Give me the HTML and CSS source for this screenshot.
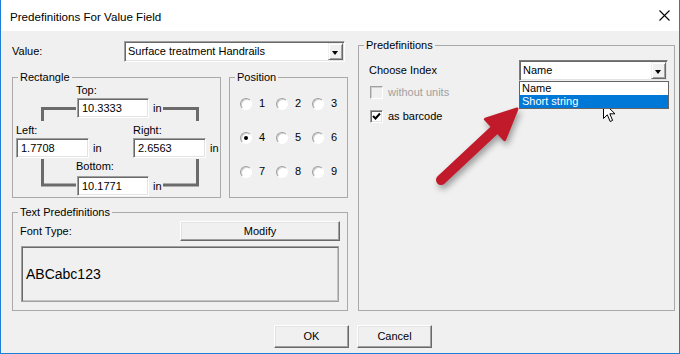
FILE: index.html
```html
<!doctype html>
<html lang="en">
    <head>
        <meta charset="UTF-8" />
        <title>Predefinitions For Value Field</title>
        <link rel="stylesheet" href="styles.css">
    </head>
    <body>
        <div class="window">
            <div class="titlebar">
                <span class="title">Predefinitions For Value Field</span>
                <svg class="close" width="11" height="11" viewBox="0 0 11 11">
                    <path d="M0.5 0.5 L10.5 10.5 M10.5 0.5 L0.5 10.5" stroke="#000" stroke-width="1.1" />
                </svg>
            </div>
            <div class="client">
                <div class="main">
                    <div class="col-left">
                        <div class="value-row">
                            <span class="value-label">Value:</span>
                            <div class="combo value-combo">
                                <span class="combo-text">Surface treatment Handrails</span>
                                <span class="drop"></span>
                            </div>
                        </div>
                        <div class="group-row">
                            <fieldset class="group rect-group">
                                <legend>Rectangle</legend>
                                <div class="rect-body">
                                    <svg class="brackets" width="207" height="112" viewBox="0 0 207 112">
                                        <path d="M63 24.5 H29.5 V37 M150 24.5 H184.5 V37 M29.5 75 V101 H63 M184.5 75 V101 H150" />
                                    </svg>
                                    <div class="mid-label">Top:</div>
                                    <div class="unit-row mid-row">
                                        <div class="field">10.3333</div>
                                        <span class="unit">in</span>
                                    </div>
                                    <div class="side-labels">
                                        <span>Left:</span>
                                        <span>Right:</span>
                                    </div>
                                    <div class="side-fields">
                                        <div class="unit-row">
                                            <div class="field side">1.7708</div>
                                            <span class="unit">in</span>
                                        </div>
                                        <div class="unit-row">
                                            <div class="field side">2.6563</div>
                                            <span class="unit">in</span>
                                        </div>
                                    </div>
                                    <div class="mid-label bottom-label">Bottom:</div>
                                    <div class="unit-row mid-row bottom-row">
                                        <div class="field">10.1771</div>
                                        <span class="unit">in</span>
                                    </div>
                                </div>
                            </fieldset>
                            <fieldset class="group pos-group">
                                <legend>Position</legend>
                                <div class="radios">
                                    <div class="radio-item"><span class="radio"></span>1</div>
                                    <div class="radio-item"><span class="radio"></span>2</div>
                                    <div class="radio-item"><span class="radio"></span>3</div>
                                    <div class="radio-item"><span class="radio checked"></span>4</div>
                                    <div class="radio-item"><span class="radio"></span>5</div>
                                    <div class="radio-item"><span class="radio"></span>6</div>
                                    <div class="radio-item"><span class="radio"></span>7</div>
                                    <div class="radio-item"><span class="radio"></span>8</div>
                                    <div class="radio-item"><span class="radio"></span>9</div>
                                </div>
                            </fieldset>
                        </div>
                        <fieldset class="group text-group">
                            <legend>Text Predefinitions</legend>
                            <div class="font-row">
                                <span>Font Type:</span>
                                <div class="button modify">Modify</div>
                            </div>
                            <div class="preview">ABCabc123</div>
                        </fieldset>
                    </div>
                    <fieldset class="group predef-group">
                        <legend>Predefinitions</legend>
                        <div class="index-row">
                            <span>Choose Index</span>
                            <div class="combo-wrap">
                                <div class="combo index-combo">
                                    <span class="combo-text">Name</span>
                                    <span class="drop"></span>
                                </div>
                                <div class="droplist">
                                    <div class="option">Name</div>
                                    <div class="option selected">Short string</div>
                                </div>
                            </div>
                        </div>
                        <div class="check-row disabled">
                            <span class="checkbox"></span>
                            <span>without units</span>
                        </div>
                        <div class="check-row">
                            <span class="checkbox">
                                <svg width="9" height="9" viewBox="0 0 9 9">
                                    <path d="M1 4 L3.5 6.5 L8 1.5" fill="none" stroke="#000" stroke-width="2" />
                                </svg>
                            </span>
                            <span>as barcode</span>
                        </div>
                    </fieldset>
                </div>
                <div class="buttons">
                    <div class="button dlg">OK</div>
                    <div class="button dlg">Cancel</div>
                </div>
            </div>

            <!-- annotation overlays -->
            <svg class="arrow" width="110" height="100" viewBox="0 0 110 100">
                <path d="M20 85 L74 34.5" stroke="#c11a2b" stroke-width="10" stroke-linecap="round" />
                <path d="M96 14 L83.6 44.7 L64.4 24.3 Z" fill="#c11a2b" stroke="#c11a2b" stroke-width="3" stroke-linejoin="round" />
            </svg>
            <svg class="cursor" width="14" height="22" viewBox="0 0 14 22">
                <path d="M0.5 0.5 L0.5 16.5 L4.3 12.8 L7.2 19.5 L9.6 18.4 L6.8 11.8 L12 11.8 Z" fill="#fff" stroke="#000" stroke-width="1" />
            </svg>
        </div>
    </body>
</html>
```

FILE: styles.css
```css
body {
    margin: 0;
    padding: 0;
    background: #f0f0f0;
    font-family: "Liberation Sans", Arial, sans-serif;
    font-size: 11px;
    line-height: 13px;
    color: #000;
}

.window {
    position: relative;
    width: 680px;
    height: 354px;
    box-sizing: border-box;
    border: 1px solid #1a7fd5;
    border-top: none;
    display: flex;
    flex-direction: column;
    overflow: hidden;
}

.titlebar {
    height: 31px;
    flex: none;
    background: #fff;
    display: flex;
    align-items: center;
    padding: 0 9px 0 9px;
}

.title {
    font-size: 11.6px;
    padding-top: 1px;
}

.close {
    margin-left: auto;
    margin-top: 0;
}

.client {
    flex: 1;
    background: #f0f0f0;
    padding: 8px 4px 0 11px;
    display: flex;
    flex-direction: column;
}

.main {
    display: grid;
    grid-template-columns: 336px 317px;
    column-gap: 10px;
    height: 272px;
}

.col-left {
    display: flex;
    flex-direction: column;
}

/* group boxes */
.group {
    margin: 0;
    padding: 0;
    min-width: 0;
    border: 1px solid #a9a9a9;
}

.group legend {
    padding: 0 2px;
    margin-left: 5px;
    line-height: 13px;
}

/* value row */
.value-row {
    display: flex;
    align-items: center;
    margin-top: 2px;
    height: 21px;
}

.value-label {
    width: 112px;
}

.combo {
    display: flex;
    box-sizing: border-box;
    height: 21px;
    background: #fff;
    border: 1px solid;
    border-color: #a0a0a0 #fff #fff #a0a0a0;
    box-shadow: inset 1px 1px 0 #696969, inset -1px -1px 0 #e3e3e3;
}

.value-combo {
    width: 221px;
}

.combo-text {
    flex: 1;
    padding-left: 3px;
    align-self: center;
}

.drop {
    position: relative;
    width: 15px;
    margin: 1px 1px 1px 0;
    box-sizing: border-box;
    background: #f0f0f0;
    border: 1px solid;
    border-color: #f0f0f0 #696969 #696969 #f0f0f0;
    box-shadow: inset 1px 1px 0 #fff, inset -1px -1px 0 #a0a0a0;
}

.drop::after {
    content: "";
    position: absolute;
    left: 3px;
    top: 7px;
    border-left: 3.5px solid transparent;
    border-right: 3.5px solid transparent;
    border-top: 4px solid #000;
}

/* rectangle + position */
.group-row {
    display: flex;
    gap: 8px;
    margin-top: 9px;
}

.rect-group {
    width: 209px;
    box-sizing: border-box;
    padding-bottom: 1px;
}

.rect-body {
    position: relative;
}

.brackets {
    position: absolute;
    left: 0;
    top: 0;
}

.brackets path {
    fill: none;
    stroke: #6b6b6b;
    stroke-width: 3;
}

.mid-label {
    margin-left: 63px;
}

.bottom-label {
    margin-top: 2px;
}

.unit-row {
    position: relative;
    display: flex;
    align-items: center;
    gap: 4px;
}

.mid-row {
    margin-left: 64px;
    margin-top: 1px;
}

.bottom-row {
    margin-top: 3px;
}

.field {
    box-sizing: border-box;
    width: 72px;
    height: 20px;
    background: #fff;
    border: 1px solid;
    border-color: #a0a0a0 #fff #fff #a0a0a0;
    box-shadow: inset 1px 1px 0 #696969, inset -1px -1px 0 #e3e3e3;
    padding: 3px 0 0 4px;
}

.field.side {
    width: 73px;
}

.side-labels,
.side-fields {
    display: grid;
    grid-template-columns: 117px auto;
    padding-left: 3px;
}

.side-labels {
    margin-top: 6px;
}

.side-fields {
    margin-top: 1px;
}

.pos-group {
    width: 119px;
    box-sizing: border-box;
}

.radios {
    display: grid;
    grid-template-columns: repeat(3, 36px);
    row-gap: 21px;
    padding: 13px 0 0 10px;
}

.radio-item {
    display: flex;
    align-items: center;
    gap: 7px;
}

.radio {
    position: relative;
    width: 12px;
    height: 12px;
    box-sizing: border-box;
    border-radius: 50%;
    background: #fff;
    border: 1px solid;
    border-color: #a0a0a0 #fff #fff #a0a0a0;
    box-shadow: inset 1px 1px 0 #d0d0d0;
}

.radio.checked::after {
    content: "";
    position: absolute;
    left: 3px;
    top: 3px;
    width: 4px;
    height: 4px;
    border-radius: 50%;
    background: #000;
}

/* text predefinitions */
.text-group {
    flex: 1;
    margin-top: 8px;
    padding: 0 7px 7px 8px;
}

.text-group legend {
    margin-left: -3px;
}

.font-row {
    display: flex;
    align-items: center;
    justify-content: space-between;
    margin-top: 2px;
    padding-left: 0;
}

.font-row span {
    margin-left: -1px;
}

.button {
    box-sizing: border-box;
    height: 20px;
    background: #f0f0f0;
    border: 1px solid;
    border-color: #fff #696969 #696969 #fff;
    box-shadow: inset -1px -1px 0 #a0a0a0, inset 1px 1px 0 #e3e3e3;
    display: flex;
    align-items: center;
    justify-content: center;
}

.modify {
    width: 160px;
    margin-right: 0;
}

.preview {
    box-sizing: border-box;
    height: 56px;
    margin-top: 5px;
    margin-right: 1px;
    border: 1px solid #a0a0a0;
    box-shadow: inset 1px 1px 0 #696969, inset -1px -1px 0 #c4c4c4;
    display: flex;
    align-items: center;
    padding-left: 4px;
    font-size: 14px;
}

/* predefinitions */
.predef-group {
    padding: 0 6px 0 10px;
}

.predef-group legend {
    margin-left: -5px;
}

.index-row {
    display: flex;
    align-items: center;
    justify-content: space-between;
    margin-top: 8px;
}

.combo-wrap {
    position: relative;
}

.index-combo {
    width: 149px;
    border-color: #7a7a7a #f0f0f0 #f0f0f0 #7a7a7a;
}

.droplist {
    position: absolute;
    left: 0;
    top: 100%;
    width: 150px;
    box-sizing: border-box;
    background: #fff;
    border: 1px solid #646464;
    z-index: 2;
}

.option {
    height: 13px;
    padding-left: 2px;
}

.option.selected {
    background: #0078d7;
    color: #fff;
}

.check-row {
    display: flex;
    align-items: center;
    gap: 5px;
    margin-top: 5px;
    padding-left: 1px;
}

.check-row + .check-row {
    margin-top: 11px;
}

.check-row.disabled {
    color: #a0a0a0;
}

.checkbox {
    width: 13px;
    height: 13px;
    box-sizing: border-box;
    background: #fff;
    border: 1px solid;
    border-color: #a0a0a0 #fff #fff #a0a0a0;
    box-shadow: inset 1px 1px 0 #696969, inset -1px -1px 0 #e3e3e3;
    display: flex;
    align-items: center;
    justify-content: center;
}

.disabled .checkbox {
    background: #f0f0f0;
    box-shadow: inset 1px 1px 0 #d0d0d0;
}

/* dialog buttons */
.buttons {
    display: flex;
    gap: 8px;
    margin-top: 14px;
    padding-left: 262px;
}

.button.dlg {
    width: 75px;
    height: 23px;
}

/* overlays */
.arrow {
    position: absolute;
    left: 420px;
    top: 95px;
    filter: drop-shadow(2px 4px 3px rgba(0, 0, 0, 0.35));
}

.cursor {
    position: absolute;
    left: 602px;
    top: 102px;
}
```
